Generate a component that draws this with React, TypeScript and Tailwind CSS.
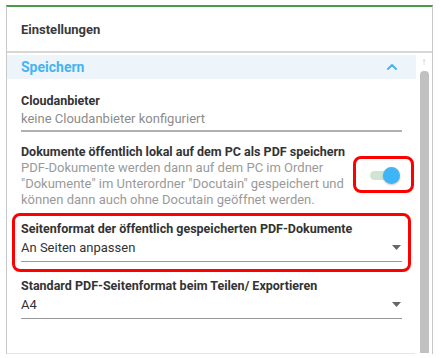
import { ChevronUp } from 'lucide-react';

const font = { fontFamily: 'Roboto, "Liberation Sans", sans-serif' };

function Caret() {
  return (
    <svg width="9" height="5" viewBox="0 0 9 5" className="shrink-0">
      <path d="M0 0h9L4.5 5z" fill="#666" />
    </svg>
  );
}

function SelectField({ label, value }: { label: string; value: string }) {
  return (
    <div className="px-[14px]">
      <div className="text-[12.5px] font-bold leading-[18px] text-[#333]">{label}</div>
      <div className="flex items-center justify-between border-b border-[#999] pb-[5px] pr-[1px] pt-[1px]">
        <span className="text-[13px] leading-[17px] text-[#333]">{value}</span>
        <Caret />
      </div>
    </div>
  );
}

function Toggle() {
  return (
    <div className="relative h-[16px] w-[30px]">
      <div className="absolute left-0 top-[4px] h-[9px] w-[26px] rounded-full bg-[#cfe5d2]" />
      <div className="absolute right-0 top-0 h-[17px] w-[17px] rounded-full bg-[#3eb5f7] shadow-[0_1px_2px_rgba(0,0,0,0.25)]" />
    </div>
  );
}

export default function App() {
  return (
    <div className="h-[358px] w-[441px] overflow-hidden bg-white" style={font}>
      <div className="ml-[6px] mt-[5px] w-[427px] border-t-2 border-t-[#4b9a45] border-x border-x-[#c8c8c8]">
        <div className="flex h-[46px] items-center border-b-2 border-[#d6d6d6] px-[14px] pt-[2px]">
          <span className="text-[13px] font-bold text-[#3a3a3a]">Einstellungen</span>
        </div>
        <div className="flex h-[300px]">
          <div className="min-w-0 flex-1 pt-[2px]">
            <div className="flex h-[24px] items-center justify-between bg-[#eef5fa] pl-[14px] pr-[16px]">
              <span className="text-[14px] font-bold text-[#45b4f2]">Speichern</span>
              <ChevronUp size={16} strokeWidth={3} color="#45b4f2" />
            </div>

            <div className="px-[14px] pt-[13px]">
              <div className="text-[12.5px] font-bold leading-[18px] text-[#333]">Cloudanbieter</div>
              <div className="border-b-2 border-[#b0b0b0] pb-[2px] text-[13px] leading-[18px] text-[#8c8c8c]">
                keine Cloudanbieter konfiguriert
              </div>
            </div>

            <div className="flex items-start pl-[14px] pt-[12px]">
              <div className="w-[330px] shrink-0">
                <div className="whitespace-nowrap text-[12.5px] font-bold leading-[16px] text-[#333]">
                  Dokumente öffentlich lokal auf dem PC als PDF speichern
                </div>
                <div className="text-[13px] leading-[16px] text-[#9a9a9a]">
                  PDF-Dokumente werden dann auf dem PC im Ordner "Dokumente" im Unterordner "Docutain" gespeichert
                  und können dann auch ohne Docutain geöffnet werden.
                </div>
              </div>
              <div className="relative ml-[2px] mt-[12px] flex h-[37px] w-[61px] shrink-0 items-center justify-center pl-[3px]">
                <div className="pointer-events-none absolute inset-0 rounded-[8px] border-[3px] border-[#f00]" />
                <Toggle />
              </div>
            </div>

            <div className="relative mx-[5px] mt-[5px] pb-[10px] pt-[7px]">
              <div className="pointer-events-none absolute inset-0 rounded-[8px] border-[3px] border-[#f00]" />
              <div className="-mx-[5px]">
                <SelectField label="Seitenformat der öffentlich gespeicherten PDF-Dokumente" value="An Seiten anpassen" />
              </div>
            </div>

            <div className="pt-[5px]">
              <SelectField label="Standard PDF-Seitenformat beim Teilen/ Exportieren" value="A4" />
            </div>
          </div>
          <div className="flex w-[16px] shrink-0 flex-col items-center pt-[4px]">
            <span className="text-[10px] leading-[10px] text-[#bbb]">↑</span>
            <div className="mt-[4px] w-[9px] flex-1 rounded-t-[4px] bg-[#c1c1c1]" />
          </div>
        </div>
        <div className="h-px w-[408px] bg-[#e6e6e6]" />
      </div>
    </div>
  );
}
